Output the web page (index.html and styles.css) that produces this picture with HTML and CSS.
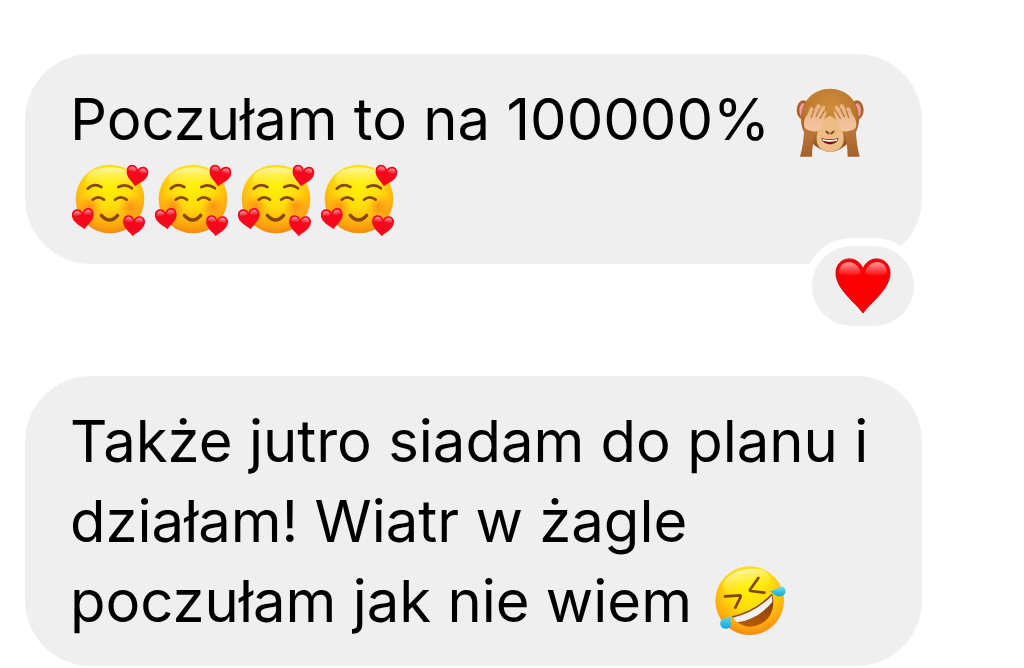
FILE: index.html
```html
<!DOCTYPE html>
<html lang="pl">
<head>
<meta charset="utf-8">
<meta name="viewport" content="width=device-width, initial-scale=1">
<title>Czat</title>
<link rel="stylesheet" href="styles.css">
</head>
<body>
<svg class="defs" width="0" height="0" aria-hidden="true">
  <defs>
    <radialGradient id="face" cx=".5" cy=".3" r=".72">
      <stop offset="0" stop-color="#fff200"/><stop offset=".45" stop-color="#ffdc0c"/><stop offset=".8" stop-color="#ffa80f"/><stop offset="1" stop-color="#f08410"/>
    </radialGradient>
    <linearGradient id="shine" x2="0" y2="1">
      <stop offset="0" stop-color="#fffbd0" stop-opacity=".8"/><stop offset="1" stop-color="#fff200" stop-opacity="0"/>
    </linearGradient>
    <radialGradient id="blush">
      <stop offset="0" stop-color="#ff6b1c" stop-opacity=".6"/><stop offset="1" stop-color="#ff7c1c" stop-opacity="0"/>
    </radialGradient>
    <linearGradient id="gloss" x2="0" y2="1">
      <stop offset="0" stop-color="#fff" stop-opacity=".6"/><stop offset="1" stop-color="#fff" stop-opacity="0"/>
    </linearGradient>
    <radialGradient id="fur" cx=".5" cy=".3" r=".65">
      <stop offset="0" stop-color="#cf8d3c"/><stop offset=".65" stop-color="#bd7931"/><stop offset="1" stop-color="#945522"/>
    </radialGradient>
    <linearGradient id="arm" x2="0" y2="1">
      <stop offset="0" stop-color="#c07c3c"/><stop offset="1" stop-color="#a4602a"/>
    </linearGradient>
    <linearGradient id="hand" x2="0" y2="1">
      <stop offset="0" stop-color="#e6b27c"/><stop offset="1" stop-color="#f4c6a2"/>
    </linearGradient>
    <linearGradient id="tear" x2="0" y2="1">
      <stop offset="0" stop-color="#62def8"/><stop offset="1" stop-color="#14a6dc"/>
    </linearGradient>
    <linearGradient id="mouth" x2="0" y2="1">
      <stop offset="0" stop-color="#7c3408"/><stop offset="1" stop-color="#b75b08"/>
    </linearGradient>
    <symbol id="mini-heart" viewBox="0 0 60 60">
      <path d="M30 58C22 48 0 37 0 18C0-2 24-3 30 12C36-3 60-2 60 18C60 37 38 48 30 58Z" fill="#f5081b"/>
      <path d="M5 17C6 3 22 3 27 16C20 23 10 23 5 17ZM33 16C38 3 54 3 55 17C50 23 40 23 33 16Z" fill="url(#gloss)"/>
    </symbol>
    <symbol id="loved" viewBox="0 0 83 80">
      <g transform="translate(-5 -4) scale(.3333)">
        <circle cx="135" cy="132" r="103" fill="url(#face)"/>
        <ellipse cx="135" cy="73" rx="72" ry="36" fill="url(#shine)"/>
        <circle cx="76" cy="154" r="35" fill="url(#blush)"/>
        <circle cx="194" cy="154" r="35" fill="url(#blush)"/>
        <g fill="none" stroke="#884710" stroke-width="8" stroke-linecap="round">
          <path d="M68 101Q87 83 109 96M160 96Q182 84 201 100"/>
          <path d="M83 134Q99 120 117 134M150 134Q167 120 185 134"/>
          <path d="M109 181Q134 209 158 181" stroke-width="10"/>
        </g>
        <use href="#mini-heart" x="182" y="30" width="66" height="66" transform="rotate(10 214 63)"/>
        <use href="#mini-heart" x="22" y="159" width="66" height="66" transform="rotate(-7 55 192)"/>
        <use href="#mini-heart" x="173" y="180" width="66" height="66" transform="rotate(5 206 213)"/>
      </g>
    </symbol>
  </defs>
</svg>

<main class="chat">
  <article class="bubble">
    <p class="text">Poczułam to na 100000% <svg class="emoji" viewBox="0 0 83 80" role="img" aria-label="Małpka zasłaniająca oczy">
      <g transform="translate(-2 1) scale(.3333)">
        <ellipse cx="58" cy="90" rx="20" ry="29" fill="#a8652a"/>
        <ellipse cx="219" cy="90" rx="20" ry="29" fill="#a8652a"/>
        <ellipse cx="57" cy="91" rx="11" ry="21" fill="#f598a0"/>
        <ellipse cx="220" cy="91" rx="11" ry="21" fill="#f598a0"/>
        <path d="M138 26C187 26 224 62 225 115C226 157 195 193 168 208Q138 223 110 208C81 193 50 158 51 115C52 62 90 26 138 26Z" fill="url(#fur)"/>
        <path d="M138 107C111 119 98 144 98 177C98 202 115 215 138 215S179 202 179 177C179 144 165 119 138 107Z" fill="#edbd86"/>
        <path d="M112 174Q138 182 163 174C160 199 117 199 112 174Z" fill="#74150f"/>
        <path d="M114 176Q138 184 161 176L158 182Q138 188 118 182Z" fill="#fff"/>
        <path d="M127 155L134 160M149 155L142 160" stroke="#8a4c24" stroke-width="6" stroke-linecap="round"/>
        <path d="M61 135L98 146Q84 190 84 230H48Q60 190 61 135ZM215 135L178 146Q191 190 191 230H227Q216 190 215 135Z" fill="url(#arm)"/>
        <g fill="url(#hand)">
          <path d="M60 139Q58 116 70 105L77 86Q82 77 88 85L89 92L99 74Q106 68 110 78L107 88L115 78Q123 74 124 84L120 94Q129 91 127 101L112 139Q101 160 84 153Q66 152 60 139Z"/>
          <path d="M217 139Q218 116 206 105L199 86Q194 77 188 85L187 92L178 74Q171 68 167 78L170 88L161 78Q153 74 152 84L156 94Q148 91 150 101L164 139Q176 160 193 153Q211 152 217 139Z"/>
        </g>
        <path d="M89 92L82 112M107 87L96 110M120 94L108 115M187 92L194 112M170 87L181 110M156 94L169 115" fill="none" stroke="#b67a42" stroke-width="4" stroke-linecap="round"/>
      </g>
    </svg><svg class="emoji" role="img" aria-label="Uśmiech z serduszkami"><use href="#loved"/></svg><svg class="emoji" role="img" aria-label="Uśmiech z serduszkami"><use href="#loved"/></svg><svg class="emoji" role="img" aria-label="Uśmiech z serduszkami"><use href="#loved"/></svg><svg class="emoji" role="img" aria-label="Uśmiech z serduszkami"><use href="#loved"/></svg></p>
    <button class="reaction" type="button" aria-label="Reakcja: serce">
      <svg class="heart" viewBox="0 0 56 56" aria-hidden="true">
        <path d="M28 55C20 44 1 31 1 15C1-2 23-4 28 11C33-4 55-2 55 15C55 31 36 44 28 55Z" fill="#fb0003" stroke="#cc0a10" stroke-width="1"/>
        <path d="M4 15C4 1 22 0 26 15C20 19 10 20 4 15ZM30 15C34 0 52 1 52 15C46 20 36 19 30 15Z" fill="url(#gloss)"/>
      </svg>
    </button>
  </article>

  <article class="bubble">
    <p class="text">Także jutro siadam do planu i działam! Wiatr w żagle poczułam jak nie wiem <svg class="emoji" viewBox="0 0 83 80" role="img" aria-label="Turlanie się ze śmiechu">
      <g transform="translate(-4 -1) scale(.3333)">
        <circle cx="137" cy="122" r="103" fill="url(#face)"/>
        <ellipse cx="128" cy="66" rx="72" ry="38" fill="url(#shine)" transform="rotate(-12 128 66)"/>
        <path d="M63 109L109 106Q111 108 109 112L94 143M163 54L138 89Q137 92 140 93L181 98" fill="none" stroke="#854308" stroke-width="8" stroke-linecap="round" stroke-linejoin="round"/>
        <path d="M84 172Q155 155 205 103C216 146 197 184 161 196Q117 211 84 172Z" fill="url(#mouth)"/>
        <path d="M85 172Q155 155 204 104L205 126Q161 179 100 187Q91 182 85 172Z" fill="#f3f0ef"/>
        <path d="M85 171Q155 155 204 103" fill="none" stroke="#8d4909" stroke-width="5"/>
        <path d="M197 93Q217 90 226 82C240 76 249 89 243 101C235 113 217 110 209 103Q203 97 197 93Z" fill="url(#tear)"/>
        <path d="M82 165Q77 180 82 191C80 208 61 211 52 200C43 188 53 176 65 175Q75 173 82 165Z" fill="url(#tear)"/>
      </g>
    </svg></p>
  </article>
</main>
</body>
</html>
```
FILE: styles.css
```css
* {
  box-sizing: border-box;
}

body {
  margin: 0;
  background: #fff;
  color: #000;
  font-family: Inter, "Liberation Sans", sans-serif;
}

.defs {
  position: absolute;
}

.chat {
  display: flex;
  flex-direction: column;
  gap: 112px;
  padding: 54px 102px 0 25px;
}

.bubble {
  position: relative;
  padding: 25px 45px;
  border-radius: 66px;
  background: #efefef;
}

.text {
  margin: 0;
  font-size: 58px;
  line-height: 80px;
}

.emoji {
  width: 83px;
  height: 80px;
  vertical-align: top;
}

.reaction {
  position: absolute;
  right: 0;
  bottom: -70px;
  display: flex;
  align-items: center;
  justify-content: center;
  width: 118px;
  height: 96px;
  padding: 0;
  border: 8px solid #fff;
  border-radius: 48px;
  background: #efefef;
}

.heart {
  width: 56px;
  height: 56px;
}
```
